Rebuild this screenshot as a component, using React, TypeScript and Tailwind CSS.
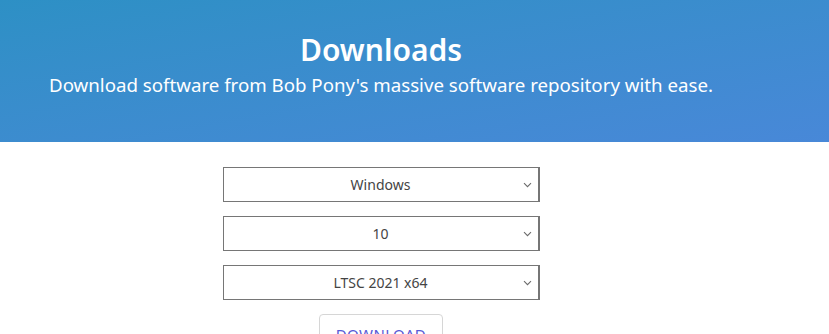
const selects = [
  { value: "Windows", options: ["Windows", "macOS", "Linux"] },
  { value: "10", options: ["7", "8.1", "10", "11"] },
  { value: "LTSC 2021 x64", options: ["LTSC 2021 x64", "LTSC 2019 x64", "22H2 x64"] },
];

function Chevron() {
  return (
    <svg width="9" height="6" viewBox="0 0 9 6" className="text-[#6b6b6b]">
      <path d="M1 1.2l3.5 3.5 3.5-3.5" fill="none" stroke="currentColor" strokeWidth="1.1" />
    </svg>
  );
}

export default function App() {
  return (
    <div className="min-h-[334px] bg-white font-['Noto_Sans',sans-serif]">
      <header className="h-[142px] bg-gradient-to-br from-[#2d90c5] to-[#4888d8]">
        <div className="w-[762px] pt-[29px] text-center text-white">
          <h1 className="text-[30px] font-semibold leading-[42px]">Downloads</h1>
          <p className="text-[18.7px] leading-[28px]">
            Download software from Bob Pony's massive software repository with ease.
          </p>
        </div>
      </header>

      <main className="w-[762px] pt-[25px] flex flex-col items-center">
        <div className="flex flex-col gap-[14px]">
          {selects.map((s) => (
            <div
              key={s.value}
              className="relative w-[317px] h-[35px] border border-[#767676] border-r-2 flex items-center justify-center text-[14px] text-[#444]"
            >
              <span>{s.value}</span>
              <span className="absolute right-[6px] top-[14px] flex">
                <Chevron />
              </span>
            </div>
          ))}
        </div>
        <button className="mt-[14px] h-[40px] px-[16px] border border-[#d6d6d6] rounded-[4px] text-[15px] text-[#5a5ad6] tracking-wide">
          DOWNLOAD
        </button>
      </main>
    </div>
  );
}
